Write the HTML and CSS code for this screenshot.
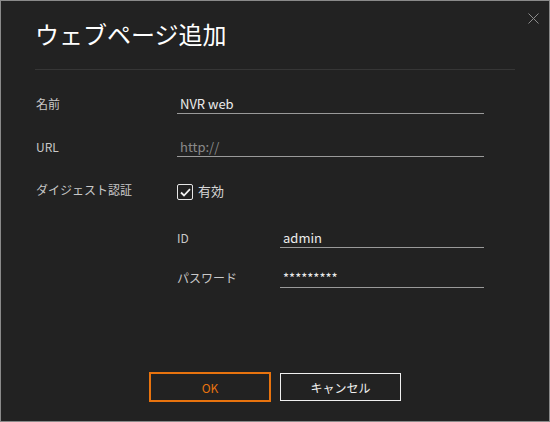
FILE: index.html
```html
<!DOCTYPE html>
<html lang="ja">
<head>
<meta charset="utf-8">
<link rel="stylesheet" href="styles.css">
</head>
<body>
<div class="dialog">
  <button class="close" aria-label="閉じる">
    <svg width="11" height="11" viewBox="0 0 11 11"><path d="M0.5 0.5 L10.5 10.5 M10.5 0.5 L0.5 10.5" stroke="#8c8c8c" stroke-width="1" fill="none"/></svg>
  </button>
  <div class="header"><h1 class="title">ウェブページ追加</h1></div>
  <div class="form">
    <div class="row r1">
      <div class="label">名前</div>
      <div class="field"><span class="value">NVR web</span></div>
    </div>
    <div class="row r2">
      <div class="label">URL</div>
      <div class="field"><span class="placeholder">http://</span></div>
    </div>
    <div class="row r3">
      <div class="label">ダイジェスト認証</div>
      <label class="check">
        <span class="box"><svg width="11" height="9" viewBox="0 0 11 9"><path d="M1 4.5 L4 7.5 L10 1.2" stroke="#f2f2f2" stroke-width="1.8" fill="none"/></svg></span>
        <span class="check-text">有効</span>
      </label>
    </div>
    <div class="sub r4">
      <div class="label">ID</div>
      <div class="field"><span class="value">admin</span></div>
    </div>
    <div class="sub r5">
      <div class="label">パスワード</div>
      <div class="field"><span class="value pw">*********</span></div>
    </div>
  </div>
  <div class="footer">
    <button class="btn ok">OK</button>
    <button class="btn cancel">キャンセル</button>
  </div>
</div>
</body>
</html>
```

FILE: styles.css
```css
html, body {
  margin: 0;
  padding: 0;
  background: #222;
}
body {
  font-family: "Noto Sans CJK JP", "Noto Sans", sans-serif;
}
.dialog {
  position: relative;
  box-sizing: border-box;
  width: 550px;
  height: 422px;
  border: 1px solid #8a8a8a;
  background: #222222;
  padding: 0 34px 19px 34px;
  display: flex;
  flex-direction: column;
}
.close {
  position: absolute;
  top: 12px;
  right: 10px;
  width: 11px;
  height: 11px;
  padding: 0;
  border: 0;
  background: none;
  display: block;
}
.close svg { display: block; }
.header {
  padding: 17px 0 19px 0;
  border-bottom: 1px solid #363636;
}
.title {
  margin: 0;
  font-size: 24px;
  line-height: 32px;
  font-weight: 400;
  color: #ffffff;
}
.form {
  padding: 20px 0 0 1px;
  width: 448px;
  display: flex;
  flex-direction: column;
}
.row, .sub {
  display: grid;
  align-items: end;
}
.row { grid-template-columns: 141px 1fr; }
.sub { grid-template-columns: 103px 1fr; margin-left: 141px; }
.r2 { margin-top: 19px; }
.r3 { margin-top: 19px; }
.r4 { margin-top: 24px; }
.r5 { margin-top: 16px; }
.label {
  font-size: 12px;
  line-height: 20px;
  padding-top: 4px;
  color: #c8c8c8;
}
.field {
  height: 24px;
  box-sizing: border-box;
  border-bottom: 1px solid #9a9a9a;
  padding: 4px 3px 0;
  font-size: 13px;
  line-height: 19px;
}
.value { color: #ececec; }
.placeholder { color: #8a8a8a; }
.check {
  display: flex;
  align-items: flex-end;
  gap: 5px;
  height: 24px;
}
.box {
  box-sizing: border-box;
  width: 16px;
  height: 16px;
  border: 1.5px solid #e6e6e6;
  border-radius: 2px;
  display: flex;
  align-items: center;
  justify-content: center;
}
.box svg { display: block; }
.check-text {
  font-size: 13px;
  line-height: 18px;
  color: #d8d8d8;
}
.footer {
  margin-top: auto;
  display: flex;
  justify-content: center;
  align-items: center;
  gap: 9px;
}
.btn {
  box-sizing: border-box;
  background: transparent;
  font-family: "Noto Sans CJK JP", "Noto Sans", sans-serif;
  font-size: 12px;
  padding: 0;
}
.ok {
  width: 122px;
  height: 30px;
  border: 2px solid #e8730e;
  color: #e8730e;
}
.cancel {
  width: 121px;
  height: 28px;
  border: 1px solid #f0f0f0;
  color: #f0f0f0;
}
```
